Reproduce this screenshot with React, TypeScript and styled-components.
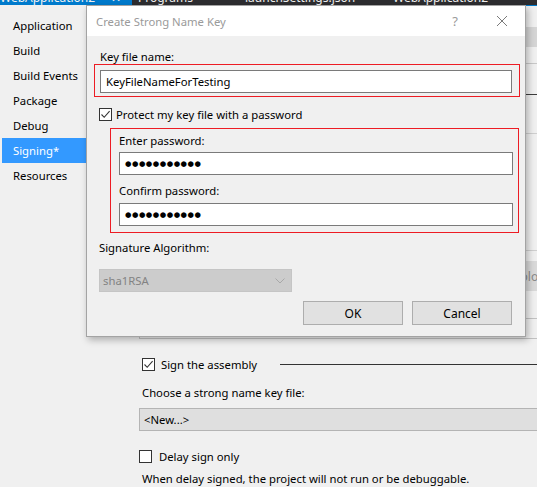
import React from "react";
import styled, { createGlobalStyle } from "styled-components";

const Global = createGlobalStyle`
  html, body { margin: 0; padding: 0; background: #f0f0f0; }
  body {
    font-family: "Noto Sans", "Open Sans", sans-serif;
    font-size: 11.3px;
    color: #000;
  }
  #root { width: 537px; height: 487px; overflow: hidden; }
`;

const Page = styled.div`
  position: relative;
  width: 537px;
  height: 487px;
  overflow: hidden;
  display: flex;
  flex-direction: column;
  background: #f0f0f0;
`;

const TopBar = styled.div`
  flex: none;
  height: 5px;
  display: flex;
  align-items: flex-end;
  overflow: hidden;
  background: #2d2d30;
`;

const DocTab = styled.div<{ $active?: boolean; $w: number; $pl: number }>`
  flex: none;
  width: ${(p) => p.$w}px;
  padding-left: ${(p) => p.$pl}px;
  box-sizing: border-box;
  display: flex;
  gap: 8px;
  font-size: 12px;
  line-height: 14px;
  white-space: nowrap;
  color: #f1f1f1;
  background: ${(p) => (p.$active ? "#007acc" : "transparent")};
`;

const Main = styled.div`
  flex: 1;
  display: flex;
  min-height: 0;
`;

const Nav = styled.nav`
  flex: none;
  width: 139px;
  padding-top: 8px;
  display: flex;
  flex-direction: column;
`;

const NavItem = styled.div<{ $active?: boolean }>`
  height: 25px;
  margin-left: 2px;
  padding-left: 11px;
  display: flex;
  align-items: center;
  background: ${(p) => (p.$active ? "#3399ff" : "transparent")};
  color: ${(p) => (p.$active ? "#fff" : "#000")};
`;

const Content = styled.div`
  flex: 1;
  min-width: 0;
  border-top: 1px solid #007acc;
  display: flex;
  flex-direction: column;
`;

const Band = styled.div<{ $mt: number; $h: number; $bg: string }>`
  flex: none;
  margin-top: ${(p) => p.$mt}px;
  height: ${(p) => p.$h}px;
  background: ${(p) => p.$bg};
`;

const GhostButton = styled.div`
  flex: none;
  margin-top: 10px;
  height: 30px;
  padding-left: 374px;
  display: flex;
  align-items: center;
  background: #d9d9d9;
  color: #8a8a8a;
  font-size: 12px;
  white-space: nowrap;
`;

const GhostBox = styled.div`
  flex: none;
  margin-top: 27px;
  height: 21px;
  box-sizing: border-box;
  border: 1px solid #c2c2c2;
  margin-right: -4px;
`;

const CheckRow = styled.div<{ $mt: number; $pl: number; $gap: number }>`
  flex: none;
  display: flex;
  align-items: center;
  height: 16px;
  margin-top: ${(p) => p.$mt}px;
  padding-left: ${(p) => p.$pl}px;
  gap: ${(p) => p.$gap}px;
  white-space: nowrap;
`;

const Box = styled.span`
  flex: none;
  width: 13px;
  height: 13px;
  box-sizing: border-box;
  border: 1px solid #333;
  background: #fff;
  display: flex;
`;

const GroupLine = styled.div`
  flex: 1;
  height: 1px;
  margin-left: 17px;
  background: #333;
`;

const Label = styled.div<{ $mt: number; $ml?: number }>`
  flex: none;
  line-height: 15px;
  margin-top: ${(p) => p.$mt}px;
  margin-left: ${(p) => p.$ml ?? 0}px;
  white-space: nowrap;
`;

const KeyFileSelect = styled.div`
  flex: none;
  margin-top: 8px;
  margin-right: -10px;
  height: 23px;
  box-sizing: border-box;
  border: 1px solid #b4b4b4;
  background: #dfdfdf;
  padding-left: 4px;
  display: flex;
  align-items: center;
`;

/* ---------- dialog ---------- */

const Dialog = styled.div`
  position: absolute;
  left: 86px;
  top: 5px;
  width: 440px;
  height: 332px;
  box-sizing: border-box;
  border: 1px solid #a3a3a3;
  background: #f0f0f0;
  box-shadow: 2px 3px 7px rgba(0, 0, 0, 0.28);
  display: flex;
  flex-direction: column;
`;

const TitleBar = styled.div`
  flex: none;
  height: 30px;
  background: #fff;
  display: flex;
  align-items: center;
  padding-left: 9px;
  color: #9a9a9a;
`;

const TitleButtons = styled.div`
  margin-left: auto;
  display: flex;
  align-items: center;
`;

const HelpBtn = styled.span`
  width: 14px;
  text-align: center;
  color: #9a9a9a;
  font-size: 13px;
  margin-right: 34px;
`;

const CloseBtn = styled.span`
  width: 12px;
  height: 12px;
  margin-right: 17px;
  display: flex;
`;

const DialogBody = styled.div`
  flex: 1;
  padding: 0 5px 0 7px;
  display: flex;
  flex-direction: column;
`;

const RedBox = styled.div<{ $mt: number; $ml: number; $mr: number; $pad: string }>`
  flex: none;
  margin-top: ${(p) => p.$mt}px;
  margin-left: ${(p) => p.$ml}px;
  margin-right: ${(p) => p.$mr}px;
  padding: ${(p) => p.$pad};
  border: 1px solid #ed1c24;
  display: flex;
  flex-direction: column;
`;

const TextBox = styled.div<{ $mt?: number }>`
  flex: none;
  height: 23px;
  margin-top: ${(p) => p.$mt ?? 0}px;
  box-sizing: border-box;
  border: 1px solid #7a7a7a;
  background: #fff;
  padding-left: 5px;
  display: flex;
  align-items: center;
  white-space: nowrap;
`;

const Dots = styled.span`
  font-family: "DejaVu Sans", sans-serif;
  font-size: 7.4px;
  letter-spacing: 0.5px;
  color: #000;
`;

const AlgoSelect = styled.div`
  flex: none;
  margin-top: 14px;
  margin-left: 5px;
  width: 193px;
  height: 23px;
  box-sizing: border-box;
  border: 1px solid #c5c5c5;
  background: #cccccc;
  color: #838383;
  padding: 0 6px 0 3px;
  display: flex;
  align-items: center;
  justify-content: space-between;
`;

const ButtonRow = styled.div`
  flex: none;
  margin-top: 9px;
  margin-right: 8px;
  display: flex;
  justify-content: flex-end;
  gap: 9px;
`;

const DlgButton = styled.div`
  width: 100px;
  height: 24px;
  box-sizing: border-box;
  border: 1px solid #adadad;
  background: #e1e1e1;
  display: flex;
  align-items: center;
  justify-content: center;
  font-size: 12px;
`;

const Check = () => (
  <svg width="11" height="11" viewBox="0 0 11 11">
    <path d="M1.5 5.5 L4.2 8.3 L9.6 2.2" fill="none" stroke="#333" strokeWidth="1.1" />
  </svg>
);

const CheckBox = ({ checked }: { checked?: boolean }) => <Box>{checked && <Check />}</Box>;

const navItems = ["Application", "Build", "Build Events", "Package", "Debug", "Signing*", "Resources"];
const dots = "●●●●●●●●●●●";

export default function App() {
  return (
    <Page>
      <Global />
      <TopBar>
        <DocTab $active $w={132} $pl={0}>
          <span>WebApplication2</span>
          <span>ᵒ ✕</span>
        </DocTab>
        <DocTab $w={108} $pl={6}>Programs</DocTab>
        <DocTab $w={146} $pl={5}>launchSettings.json</DocTab>
        <DocTab $w={151} $pl={7}>WebApplication2</DocTab>
      </TopBar>
      <Main>
        <Nav>
          {navItems.map((n) => (
            <NavItem key={n} $active={n === "Signing*"}>
              {n}
            </NavItem>
          ))}
        </Nav>
        <Content>
          <Band $mt={21} $h={20} $bg="#d5d5d5" />
          <Band $mt={16} $h={1} $bg="#c8c8c8" />
          <Band $mt={30} $h={1} $bg="#3c3c3c" />
          <Band $mt={38} $h={1} $bg="#cfcfcf" />
          <Band $mt={116} $h={1} $bg="#cfcfcf" />
          <GhostButton>Color…</GhostButton>
          <GhostBox />
          <CheckRow $mt={17} $pl={3} $gap={6}>
            <CheckBox checked />
            <span>Sign the assembly</span>
            <GroupLine />
          </CheckRow>
          <Label $mt={13} $ml={3}>Choose a strong name key file:</Label>
          <KeyFileSelect>&lt;New...&gt;</KeyFileSelect>
          <CheckRow $mt={17} $pl={0} $gap={7}>
            <CheckBox />
            <span>Delay sign only</span>
          </CheckRow>
          <Label $mt={7} $ml={3}>When delay signed, the project will not run or be debuggable.</Label>
        </Content>
      </Main>

      <Dialog>
        <TitleBar>
          <span>Create Strong Name Key</span>
          <TitleButtons>
            <HelpBtn>?</HelpBtn>
            <CloseBtn>
              <svg width="12" height="12" viewBox="0 0 12 12">
                <path d="M1 1 L11 11 M11 1 L1 11" stroke="#7a7a7a" strokeWidth="1" fill="none" />
              </svg>
            </CloseBtn>
          </TitleButtons>
        </TitleBar>
        <DialogBody>
          <Label $mt={13} $ml={6}>Key file name:</Label>
          <RedBox $mt={0} $ml={0} $mr={0} $pad="5px 7px 3px 5px">
            <TextBox>KeyFileNameForTesting</TextBox>
          </RedBox>
          <CheckRow $mt={9} $pl={5} $gap={4}>
            <CheckBox checked />
            <span>Protect my key file with a password</span>
          </CheckRow>
          <RedBox $mt={6} $ml={16} $mr={1} $pad="4px 5px 6px 8px">
            <Label $mt={0}>Enter password:</Label>
            <TextBox $mt={4}>
              <Dots>{dots}</Dots>
            </TextBox>
            <Label $mt={8}>Confirm password:</Label>
            <TextBox $mt={5}>
              <Dots>{dots}</Dots>
            </TextBox>
          </RedBox>
          <Label $mt={7} $ml={5}>Signature Algorithm:</Label>
          <AlgoSelect>
            <span>sha1RSA</span>
            <svg width="10" height="6" viewBox="0 0 10 6">
              <path d="M0.5 0.5 L5 5 L9.5 0.5" fill="none" stroke="#a8a8a8" strokeWidth="1" />
            </svg>
          </AlgoSelect>
          <ButtonRow>
            <DlgButton>OK</DlgButton>
            <DlgButton>Cancel</DlgButton>
          </ButtonRow>
        </DialogBody>
      </Dialog>
    </Page>
  );
}
